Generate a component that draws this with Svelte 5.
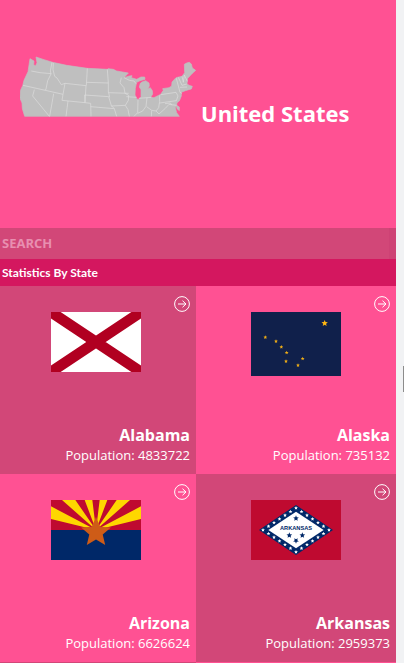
<script>
  const states = [
    { name: 'Alabama', population: 4833722 },
    { name: 'Alaska', population: 735132 },
    { name: 'Arizona', population: 6626624 },
    { name: 'Arkansas', population: 2959373 }
  ];

  let query = $state('');
  let shown = $derived(
    states.filter((s) => s.name.toLowerCase().includes(query.toLowerCase()))
  );

  // Five-pointed star as a polygon point list
  function star(cx, cy, r, down = false) {
    return Array.from({ length: 10 }, (_, i) => {
      const a = (Math.PI * i) / 5 - Math.PI / 2 + (down ? Math.PI : 0);
      const d = i % 2 ? r * 0.45 : r;
      return `${(cx + d * Math.cos(a)).toFixed(2)},${(cy + d * Math.sin(a)).toFixed(2)}`;
    }).join(' ');
  }

  const dipper = [[43, 76], [75, 88], [91, 105], [107, 122], [105, 148], [155, 140], [141, 160]];

  // Stars on the border of the Arkansas diamond
  const corners = [[135, 24], [234, 90], [135, 156], [36, 90]];
  const border = corners.flatMap(([x, y], i) => {
    const [nx, ny] = corners[(i + 1) % 4];
    return [0, 1, 2, 3, 4, 5].map((k) => [x + ((nx - x) * k) / 6, y + ((ny - y) * k) / 6]);
  });
</script>

<div class="page">
  <main>
    <header>
      <svg class="map" viewBox="30 33 531 183" role="img" aria-label="Map of the United States">
        <path
          fill="#bfbfbf"
          stroke="#bfbfbf"
          stroke-width="2"
          d="M60 41L72 48L71 60L77 62L81 53L78 36L102 44L128 52L170 61L232 70L292 73L294 71L310 73L320 78L355 84L342 98L358 93L366 92L364 98L380 103L393 96L404 96L405 103L390 107L380 112L376 130L375 150L380 161L386 164L393 155L393 134L388 126L391 115L396 111L407 107L417 114L418 123L413 132L421 128L427 137L428 147L422 157L432 158L452 148L460 136L458 131L477 128L485 123L486 111L498 98L516 94L524 83L523 58L530 54L538 52L544 57L547 69L557 76L546 86L533 100L531 116L537 121L547 124L544 132L536 134L526 137L514 142L514 153L508 168L501 173L500 181L508 186L508 197L501 191L499 182L496 188L500 203L508 214L44 214L37 191L36 174L30 160L31 137L38 122L42 106L54 80Z"
        />
        <path
          fill="none"
          stroke="#dedede"
          stroke-width="2"
          d="M64 78L90 83L124 86M126 52L121 78L123 87L113 107L108 132L106 136L39 121M73 134L68 153L118 214M106 136L159 148L165 115L154 119L141 99L134 94L129 74L130 54M131 146L119 214M165 115L228 122L225 173L156 166L159 148M174 168L168 214M225 173L224 150L296 155L304 182L313 191L320 214M232 70L229 122M230 112L295 114L295 143L356 145M292 73L295 114M296 143L299 157M225 173L242 175L243 214M242 185L313 191M303 183L346 181L354 194L358 214M334 98L330 114L342 128L345 145L356 151L355 166L346 181M342 98L358 106L372 108L378 116M349 155L380 157M384 164L383 203L372 214M411 158L408 184L398 198L383 205M386 160L411 158L424 157M410 185L425 196L438 198L446 188L449 169L449 151M425 197L424 214M438 198L447 207L466 190L477 178L500 181M449 174L499 167L504 153L498 142L452 149M465 176L481 174L486 181M499 100L510 142L516 145M505 97L516 121L530 117M516 94L520 112L523 90L532 109M510 127L531 126"
        />
      </svg>
      <h1>United States</h1>
    </header>

    <input type="search" class="search" placeholder="SEARCH" aria-label="Search states" bind:value={query} />
    <h2>Statistics By State</h2>

    <div class="grid">
      {#each shown as s (s.name)}
        <article>
          <a class="more" href="#{s.name}" aria-label="Details for {s.name}">
            <svg viewBox="0 0 16 16" width="16" height="16">
              <g fill="none" stroke="#fff" stroke-width="1">
                <circle cx="8" cy="8" r="7.4" />
                <path d="M4 8H12M8.5 4.7L12 8L8.5 11.3" />
              </g>
            </svg>
          </a>
          <div class="picture">
            {#if s.name === 'Alabama'}
              <svg class="flag" viewBox="0 0 270 180" role="img" aria-label="Flag of Alabama">
                <path fill="#fff" d="M0 0H270V180H0Z" />
                <path stroke="#b10021" stroke-width="32" d="M-15 -10L285 190M285 -10L-15 190" />
              </svg>
            {:else if s.name === 'Alaska'}
              <svg class="flag" viewBox="0 0 270 192" role="img" aria-label="Flag of Alaska">
                <path fill="#10204b" d="M0 0H270V192H0Z" />
                <polygon fill="#ffb612" points={star(221, 34, 10)} />
                {#each dipper as [x, y]}
                  <polygon fill="#f0ae17" points={star(x, y, 6)} />
                {/each}
              </svg>
            {:else if s.name === 'Arizona'}
              <svg class="flag" viewBox="0 0 270 180" role="img" aria-label="Flag of Arizona">
                <path fill="#bf0a30" d="M0 0H270V90H0Z" />
                <path
                  fill="#fed700"
                  d="M135 90L0 57V19ZM135 90L33 0H73ZM135 90L101 0H124ZM135 90L146 0H169ZM135 90L197 0H237ZM135 90L270 19V57Z"
                />
                <path fill="#002868" d="M0 90H270V180H0Z" />
                <polygon fill="#ce5c17" points={star(135, 97, 47)} />
              </svg>
            {:else}
              <svg class="flag" viewBox="0 0 270 180" role="img" aria-label="Flag of Arkansas">
                <path fill="#bf0a30" d="M0 0H270V180H0Z" />
                <path fill="#002868" d="M135 15L246 90L135 165L24 90Z" />
                <path fill="#fff" d="M135 35L218 90L135 145L52 90Z" />
                {#each border as [x, y]}
                  <polygon fill="#fff" points={star(x, y, 6)} />
                {/each}
                <g fill="#002868">
                  <polygon points={star(135, 55, 9)} />
                  <polygon points={star(115, 106, 9)} />
                  <polygon points={star(154, 106, 9)} />
                  <polygon points={star(135, 122, 9, true)} />
                  <text x="135" y="90" text-anchor="middle">ARKANSAS</text>
                </g>
              </svg>
            {/if}
          </div>
          <h3>{s.name}</h3>
          <p>Population: {s.population}</p>
        </article>
      {/each}
    </div>
  </main>
  <div class="track"><div class="thumb"></div></div>
</div>

<style>
  :global(body) {
    margin: 0;
    overflow: hidden;
  }
  .page {
    display: flex;
    height: 100vh;
    background: #f1f2f4;
    font-family: 'Open Sans', 'Noto Sans', sans-serif;
    color: #fff;
  }
  main {
    flex: 1;
    min-width: 0;
    overflow: hidden;
    background: #ff5193;
  }
  header {
    display: flex;
    align-items: flex-start;
    gap: 4px;
    box-sizing: border-box;
    height: 228px;
    padding: 56px 20px 0;
  }
  .map {
    width: 177px;
    height: 61px;
    flex: none;
  }
  h1 {
    margin: 41px 0 0;
    font-size: 22px;
    line-height: 32px;
    font-weight: 700;
    white-space: nowrap;
  }
  .search {
    display: block;
    box-sizing: border-box;
    width: 100%;
    height: 31px;
    margin: 0;
    padding: 0 2px 2px;
    border: 0;
    border-right: 7px solid #ce4275;
    border-radius: 0;
    outline: 0;
    appearance: none;
    background: #d24778;
    color: #fff;
    font: 700 13px 'Open Sans', 'Noto Sans', sans-serif;
  }
  .search::placeholder {
    color: #e88fb0;
    opacity: 1;
  }
  h2 {
    margin: 0;
    padding: 0 2px;
    background: #d4175f;
    font: 700 12px/27px Lato, sans-serif;
  }
  .grid {
    display: grid;
    grid-template-columns: calc(50% - 2px) 1fr;
    grid-auto-rows: 188px;
    background: linear-gradient(90deg, #d24778 calc(50% - 2px), #ff5193 0);
  }
  .grid::after {
    content: '';
  }
  article {
    position: relative;
    box-sizing: border-box;
    padding: 26px 6px 0;
    background: #ff5193;
    text-align: right;
  }
  article:nth-child(4n + 1),
  article:nth-child(4n) {
    background: #d24778;
  }
  .more {
    position: absolute;
    top: 10px;
    right: 6px;
    display: flex;
  }
  .picture {
    display: flex;
    align-items: flex-start;
    justify-content: flex-end;
    height: 112px;
    padding-right: 49px;
  }
  .flag {
    display: block;
    width: 90px;
  }
  .flag text {
    font: 700 17px 'Liberation Sans', Arial, sans-serif;
  }
  h3 {
    margin: 0;
    font-size: 16px;
    line-height: 22px;
    font-weight: 700;
  }
  p {
    margin: 0;
    font-size: 13px;
    line-height: 18px;
  }
  .track {
    display: flex;
    flex: none;
    align-items: flex-start;
    justify-content: flex-end;
    width: 8px;
  }
  .thumb {
    width: 1px;
    height: 26px;
    margin-top: 366px;
    background: #8c8c8c;
  }
</style>
